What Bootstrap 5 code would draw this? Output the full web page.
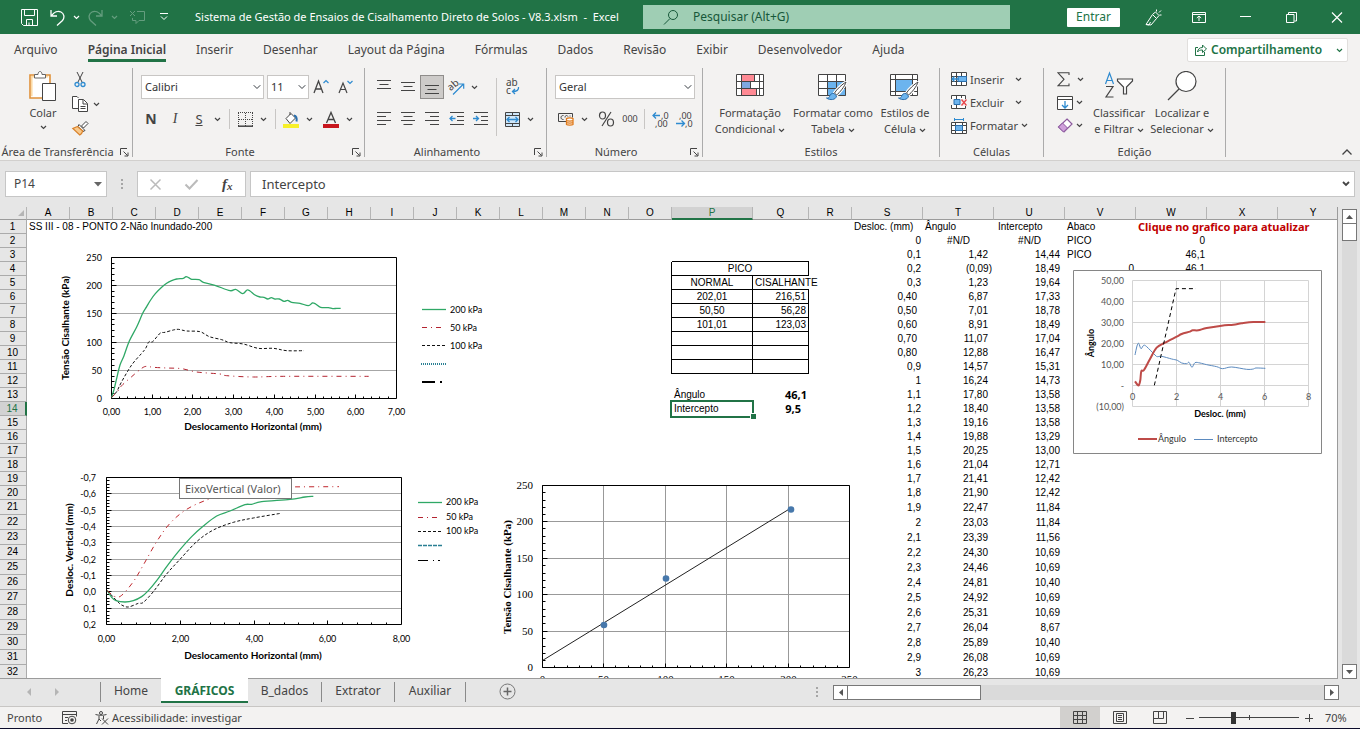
<!DOCTYPE html>
<html lang="pt-BR">
<head>
<meta charset="utf-8">
<meta name="viewport" content="width=device-width, initial-scale=1">
<title>Sistema de Gestão de Ensaios de Cisalhamento Direto de Solos - Excel</title>
<link href="https://cdn.jsdelivr.net/npm/bootstrap@5.3.0/dist/css/bootstrap.min.css" rel="stylesheet">
<style>
:root{--xl:#217346;--ink:#444;--line:#ababab;--pane:#e6e6e6}
body{font-family:"Noto Sans","Open Sans",sans-serif;font-size:11px;line-height:16px;color:var(--ink);background:var(--pane)}
svg{display:block;flex:none}
.tool svg{overflow:visible}
.ln{fill:none;stroke:currentColor}
button{color:inherit}
.titlebar{display:grid;grid-template-columns:643fr 367fr 350fr;height:34px;background:var(--xl);color:#fff}
.titlebar button{background:none;border:0;padding:0;width:24px;height:24px;display:inline-flex;align-items:center;justify-content:center}
.titlebar .slim{width:14px}
.quick{padding-left:17px}
.dim{opacity:.3}
.search-box{height:24px;background:#9fceb4;color:#17583a}
.search-box input{background:none;border:0;outline:0;font-size:12px;color:#17583a;width:100%}
.search-box input::placeholder{color:#17583a;opacity:1}
.titlebar .signin{background:#fff;color:var(--xl);width:53px;height:19px;font-size:12px;line-height:16px;border-radius:1px}
.win{margin-left:10px}
.win button{width:46px}
.menu-tabs{height:34px;background:#f3f2f1;gap:30px;padding:0 12px 0 14px}
.menu-tabs a{color:var(--ink);font-size:12px;text-decoration:none;white-space:nowrap;line-height:18px;padding:7px 0 0;border-bottom:3px solid transparent}
.menu-tabs a.active{border-color:var(--xl);font-weight:600}
.share{background:#fff;border:1px solid #e1dfdd;color:var(--xl);font-weight:600;font-size:12px;height:24px;width:161px;border-radius:2px;padding:0 4px 0 7px}
.ribbon{background:#f3f2f1;border-bottom:1px solid #d2d0ce;height:93px;padding-bottom:3px}
.rgroup{border-right:1px solid var(--line);display:flex;flex-direction:column}
.rbody{flex:1;display:flex;min-height:0}
.rfoot{height:12px;line-height:14px;position:relative;text-align:center;white-space:nowrap}
.rfoot.lead-r{padding-right:17px}
.rfoot button{position:absolute;right:3px;top:3px;border:0;background:none;padding:0}
.tool,.drop{border:0;background:none;padding:0;height:24px;display:inline-flex;align-items:center;justify-content:center;flex:none}
.tool{width:24px}.drop{width:12px}
.tool.on{background:#cdcbc9;outline:1px solid #8f8d8b;outline-offset:-1px}
.rsep{width:1px;background:#c8c6c4;height:20px;margin:0 3px 0 6px;align-self:center;flex:none}
.rows{display:flex;flex-direction:column;gap:8px;padding-top:7px}
.rows>div{display:flex;height:24px}
.ribbon .form-select{height:24px;border:1px solid #c8c6c4;border-radius:0;font-size:11px;padding:0 14px 0 3px;background-size:8px 8px;background-position:right 2px center;background-color:#fff;color:#333}
.big{border:0;background:none;padding:3px 0 0;display:flex;flex-direction:column;align-items:center;white-space:nowrap;flex:none;line-height:16px}
.big svg.pic{margin-bottom:3px}
.inl{display:inline-block;margin-left:3px;vertical-align:middle}
.small-cmd{border:0;background:none;padding:0;height:23px;display:flex;align-items:center;gap:3px;white-space:nowrap}
.clip .tool{width:20px}
.formula{height:46px;padding:10px 5px;gap:4px}
.fbox{background:#fff;border:1px solid #c6c6c6;height:26px;display:flex;align-items:center}
.fbox input{border:0;outline:0;background:none;font-size:13px;color:#444;width:100%;min-width:0;padding:0}
.fbox input.nm{font-size:12px}
.sheet{position:relative;overflow:hidden;background:#fff;border-right:1px solid #9b9b9b;border-bottom:1px solid #9b9b9b;min-height:0}
.cells{table-layout:fixed;border-collapse:separate;border-spacing:0;width:1349px;font:10px/12px "Liberation Sans",Arial,sans-serif;color:#000}
.cells th,.cells td{padding:0;height:14px;white-space:nowrap;font-weight:400}
.cells tr.tall th,.cells tr.tall td{height:15px}
.cells th{background:var(--pane);text-align:center;border-bottom:1px solid #ababab;border-right:1px solid #ababab}
.cells thead th{height:13px;line-height:12px;border-bottom-color:#9b9b9b;border-right-color:#b5b5b5}
.cells tbody th{padding-right:1px}
.cells thead th.sel{background:#d2d2d2;color:var(--xl);border-bottom:2px solid var(--xl);line-height:11px}
.cells tbody th.sel{background:#d2d2d2;color:var(--xl);border-right:2px solid var(--xl)}
.r{text-align:right}.c{text-align:center}
.cells .r{padding-right:2px}.cells .r5{padding-right:6px}.cells .r4{padding-right:5px}.cells .r8{padding-right:8px}
.cells .l{padding-left:2px}.cells .l4{padding-left:4px}
.bb{border-bottom:1px solid #000}.br{border-right:1px solid #000}
.cells .strong{font:700 11px/12px "Noto Sans",sans-serif}
.red{color:#c00000}
.pick{position:relative}
.pick::before{content:"";position:absolute;inset:-2px -1px -2px -2px;border:2px solid var(--xl)}
.pick::after{content:"";position:absolute;right:-3px;bottom:-3px;width:5px;height:5px;background:var(--xl);outline:1px solid #fff}
.chart{position:absolute;font-family:Lato,Carlito,sans-serif;font-size:9px;overflow:hidden}
.chart .ttl{font-weight:700;font-size:10px;text-anchor:middle}
.chart .e{text-anchor:end}.chart .m{text-anchor:middle}
.chart path{vector-effect:non-scaling-stroke}
.tip{position:absolute;left:179px;top:271px;width:113px;background:#fff;border:1px solid #767676;color:#575757;padding:1px 5px;line-height:17px;white-space:nowrap}
.vbar{width:15px;margin:2px 3px 0 4px;background:#dadada;display:flex;flex-direction:column}
.hbar{width:506px;height:15px;background:#dadada;display:flex}
.sb{width:15px;height:15px;background:#fff;border:1px solid #777;padding:0;display:flex;align-items:center;justify-content:center;flex:none}
.sheetbar{height:27px;padding-right:21px}
.sheetbar a{color:var(--ink);font-size:12px;text-decoration:none;text-align:center;height:20px;line-height:18px;margin-top:3px;border-right:1px solid #8a8a8a}
.sheetbar a.active{background:#fff;color:var(--xl);font-weight:700;height:25px;margin-top:-1px;line-height:26px;border:0;border-bottom:2px solid var(--xl);position:relative}
.statusbar{height:23px;background:#f3f2f1;border-top:1px solid #c8c6c4;border-bottom:1px solid #0b0b2a}
.view{width:40px;border:0;background:none;padding:0;display:flex;align-items:center;justify-content:center;height:21px}
.view.on{background:#d2d0ce}
.zoomer{width:100px;height:12px;margin:0 5px;appearance:none;background:linear-gradient(#444,#444) 50% 50%/1px 5px no-repeat,linear-gradient(#444,#444) 0 50%/100% 1px no-repeat}
.zoomer::-webkit-slider-thumb{appearance:none;width:5px;height:12px;background:#333;border:0;border-radius:0}
</style>
</head>
<body class="d-flex flex-column vh-100 overflow-hidden">

<svg width="0" height="0" class="position-absolute" aria-hidden="true">
  <symbol id="chev" viewBox="0 0 7 5"><path class="ln" stroke-width="1.2" d="M1 1l2.500 2.500L6 1"/></symbol>
  <symbol id="launch" viewBox="0 0 9 9"><path class="ln" d="M.5 7V.5H7M3.500 3.500l4 4M8 4.500V8H4.500"/></symbol>
  <symbol id="brush" viewBox="0 0 22 20"><path fill="#fff" stroke="#fff" stroke-width="3" d="M20.500 1C17 3 11 8.500 9 12l2 2c3-2 8.500-9 9.500-13z"/><path fill="#fff" stroke="#444" d="M20.500 1C17 3 11 8.500 9 12l2 2c3-2 8.500-9 9.500-13z"/><path fill="#6cb4ee" stroke="#2b6fad" d="M8.500 12.500c-2.500-.5-4 1-4.500 3-.3 1.200-1.500 1.700-3 1.500 3.500 2.600 9.500 2 10-2z"/></symbol>
</svg>

<header class="titlebar flex-shrink-0">
  <div class="quick d-flex align-items-center text-nowrap">
    <button aria-label="Salvar"><svg width="17" height="17" viewBox="0 0 17 17"><path class="ln" d="M.5.500h16v16H2.500l-2-2zM3.500.500v6h10v-6M5.500 16.500v-6h6v6M8 13.500v3"/></svg></button>
    <button class="ms-1" aria-label="Desfazer"><svg width="15" height="17" viewBox="0 0 15 17"><path class="ln" stroke-width="1.300" d="M1 1v6h6M1.200 7C4 3 8 1.500 11 3s4 5.500 1.500 8.500L7 16.500"/></svg></button>
    <button class="slim" aria-label="Mais"><svg width="7" height="5"><use href="#chev"/></svg></button>
    <button class="dim" aria-label="Refazer"><svg width="15" height="17" viewBox="0 0 15 17"><path class="ln" stroke-width="1.300" d="M14 1v6H8M13.800 7C11 3 7 1.500 4 3S0 8.500 2.500 11.500L8 16.500"/></svg></button>
    <button class="slim dim" aria-label="Mais"><svg width="7" height="5"><use href="#chev"/></svg></button>
    <button class="dim ms-1" aria-label="Comentário"><svg width="16" height="15" viewBox="0 0 16 15"><path class="ln" d="M8 1.500h7.500v9H10l-3 3v-3H3.500V8M1 1l5 5M6 1L1 6"/></svg></button>
    <button class="slim ms-2" aria-label="Personalizar"><svg width="8" height="8" viewBox="0 0 8 8"><path class="ln" d="M0 .5h8M1 3.500l3 3 3-3"/></svg></button>
    <span class="ps-4 flex-fill overflow-hidden">Sistema de Gestão de Ensaios de Cisalhamento Direto de Solos - V8.3.xlsm &nbsp;-&nbsp; Excel</span>
  </div>
  <label class="search-box d-flex align-items-center align-self-center ps-3">
    <svg width="16" height="16" viewBox="0 0 16 16" class="ms-1 me-2"><circle class="ln" cx="10" cy="6" r="4.500"/><path class="ln" d="M7 9.500L1 15.500"/></svg>
    <input type="text" class="ms-1" placeholder="Pesquisar (Alt+G)" aria-label="Pesquisar">
  </label>
  <div class="d-flex align-items-center justify-content-end">
    <button class="signin">Entrar</button>
    <div class="win d-flex">
      <button aria-label="Novidades"><svg width="17" height="17" viewBox="0 0 17 17"><path class="ln" d="M1 15.500L7.500 5.500l4 4-5.500 6.500zM1 15.500l3 .5 1.500-3M8 5l2.500-2 3.500 3.500-2.500 3M11.500 2.500V.5M14 3.500l2-2M14.500 6h2"/></svg></button>
      <button aria-label="Opções da faixa"><svg width="14" height="11" viewBox="0 0 14 11"><path class="ln" d="M.5.500h13v10H.5zM.5 2.500h13M7 9V4M4.800 6L7 4l2.200 2"/></svg></button>
      <button aria-label="Minimizar"><svg width="11" height="11"><path class="ln" d="M0 4.500h11"/></svg></button>
      <button aria-label="Restaurar"><svg width="11" height="11" viewBox="0 0 11 11"><path class="ln" d="M.5 2.500h7.500v8H.5zM2.500 2V.5H10.500v8.500H8.500"/></svg></button>
      <button aria-label="Fechar"><svg width="12" height="11" viewBox="0 0 12 11"><path class="ln" stroke-width="1.200" d="M1 .5l10 10M11 .5L1 10.500"/></svg></button>
    </div>
  </div>
</header>

<nav class="menu-tabs d-flex align-items-start flex-shrink-0">
  <a href="#">Arquivo</a><a href="#" class="active">Página Inicial</a><a href="#">Inserir</a><a href="#">Desenhar</a><a href="#">Layout da Página</a><a href="#">Fórmulas</a><a href="#">Dados</a><a href="#">Revisão</a><a href="#">Exibir</a><a href="#">Desenvolvedor</a><a href="#">Ajuda</a>
  <button class="share d-flex align-items-center ms-auto mt-1"><svg width="12" height="12" viewBox="0 0 12 12"><path class="ln" d="M3 3.500H.5v8h9V8M2.500 8c.5-3 2-4.500 5-4.500V1l4 4-4 3.500V6C5 6 3.500 6.500 2.500 8z"/></svg><span class="mx-1">Compartilhamento</span><svg class="ms-auto" width="7" height="5"><use href="#chev"/></svg></button>
</nav>

<section class="ribbon d-flex flex-shrink-0">
  <div class="rgroup" style="width:133px">
    <div class="rbody">
      <button class="big" style="width:54px;margin-left:16px">
        <svg class="pic" width="28" height="31" viewBox="0 0 28 31"><path fill="#fff" stroke="#e0913a" stroke-width="1.600" d="M1 4h20v23H1z"/><path fill="none" stroke="#fbd9a3" stroke-width="1.500" d="M2.800 25.200V5.800h16.500"/><path fill="#fff" stroke="#666" d="M5.500 7V3.500H9C9 1.500 10 .5 11 .5s2 1 2 3h3.500V7z"/><path fill="#fff" stroke="#444" d="M13.500 12.500h13v17h-13z"/></svg>
        <span class="px-3">Colar</span><svg width="7" height="16"><use href="#chev" width="7" height="5" y="4"/></svg>
      </button>
      <div class="clip d-flex flex-column">
        <button class="tool" aria-label="Recortar"><svg width="12" height="16" viewBox="0 0 12 16"><path class="ln" d="M3 0l5 10M9 0L4 10"/><g fill="none" stroke="#2e8bd0" stroke-width="1.300"><circle cx="3" cy="12.500" r="2"/><circle cx="9" cy="12.500" r="2"/></g></svg></button>
        <div class="d-flex"><button class="tool" aria-label="Copiar"><svg width="16" height="16" viewBox="0 0 16 16"><path fill="#fff" stroke="#444" d="M6 12.500H.5v-12H5L6.500 2M6.500 3.500h5l4 4v8h-9z"/><path class="ln" d="M11 4v4h4M8.500 10.500h5M8.500 12.500h5"/></svg></button><button class="drop" aria-label="Mais"><svg width="7" height="5"><use href="#chev"/></svg></button></div>
        <button class="tool" aria-label="Pincel de formatação"><svg width="17" height="15" viewBox="0 0 17 15"><path fill="#fff" stroke="#444" d="M9.500 5l4.500-4.500 2 2L11.500 7zM7 3.500l6 6-2 1-5-5z"/><path fill="#f8c98c" stroke="#d9822b" stroke-width="1.200" d="M5.500 5.500L.8 7.500l7 6.500c2-1 2.500-2.500 3-4z"/></svg></button>
      </div>
    </div>
    <div class="rfoot lead-r">Área de Transferência<button aria-label="Mais opções"><svg width="9" height="9"><use href="#launch"/></svg></button></div>
  </div>

  <div class="rgroup" style="width:232px">
    <div class="rbody"><div class="rows" style="padding-left:6px">
      <div><select class="form-select" style="width:123px;margin:0 3px 0 2px" aria-label="Fonte"><option>Calibri</option></select><select class="form-select" style="width:42px" aria-label="Tamanho"><option>11</option></select>
        <button class="tool" aria-label="Aumentar fonte"><svg width="16" height="16" viewBox="0 0 16 16"><path class="ln" stroke-width="1.300" d="M1 14L5.500 2 10 14M3 10h5"/><path fill="none" stroke="#2e8bd0" stroke-width="1.200" d="M10.500 4L13 1.500 15.500 4"/></svg></button>
        <button class="tool" aria-label="Diminuir fonte"><svg width="15" height="16" viewBox="0 0 15 16"><path class="ln" stroke-width="1.200" d="M1 14L5 4l4 10M2.500 10.500h5"/><path fill="none" stroke="#2e8bd0" stroke-width="1.200" d="M9.500 2L12 4.500 14.500 2"/></svg></button></div>
      <div><button class="tool fw-bold" style="font-size:14px">N</button><button class="tool" style="font:italic 14px 'Liberation Serif'">I</button><button class="tool text-decoration-underline" style="font-size:13px">S</button><button class="drop" aria-label="Mais"><svg width="7" height="5"><use href="#chev"/></svg></button><span class="rsep"></span>
        <button class="tool" aria-label="Bordas"><svg width="15" height="15" viewBox="0 0 15 15"><path class="ln" stroke-dasharray="1 1" d="M0 .5h15M.5 1v13M14.500 1v13M7.500 1v13M1 7.500h13"/><path class="ln" stroke-width="1.500" d="M0 14.200h15"/></svg></button><button class="drop" aria-label="Mais"><svg width="7" height="5"><use href="#chev"/></svg></button><span class="rsep"></span>
        <button class="tool" aria-label="Cor de preenchimento"><svg width="16" height="17" viewBox="0 0 16 17"><path fill="#fff" stroke="#444" d="M7 1v3M3 7.500l5-5 4.500 4.500-5.500 5.500z"/><path fill="none" stroke="#2b6fad" stroke-width="2" d="M11 4.500c2.500.5 3 3 2.500 6"/><path fill="#f7f02a" d="M0 13h16v4H0z"/></svg></button><button class="drop me-1" aria-label="Mais"><svg width="7" height="5"><use href="#chev"/></svg></button>
        <button class="tool" aria-label="Cor da fonte"><svg width="16" height="17" viewBox="0 0 16 17"><path class="ln" stroke-width="1.300" d="M3.500 12L8 1.500 12.500 12M5 8.500h6"/><path fill="#c8161d" d="M0 13h16v4H0z"/></svg></button><button class="drop" aria-label="Mais"><svg width="7" height="5"><use href="#chev"/></svg></button></div>
    </div></div>
    <div class="rfoot lead-r">Fonte<button aria-label="Mais opções"><svg width="9" height="9"><use href="#launch"/></svg></button></div>
  </div>

  <div class="rgroup" style="width:182px">
    <div class="rbody" style="padding-left:7px">
      <div class="rows">
        <div><button class="tool" aria-label="Alinhar em cima"><svg width="14" height="14"><path class="ln" d="M0 .5h14M2.500 4.500h9M0 8.500h14"/></svg></button><button class="tool" aria-label="Centralizar no meio"><svg width="14" height="14"><path class="ln" d="M0 2.500h14M2.500 6.500h9M0 10.500h14"/></svg></button><button class="tool on" aria-label="Alinhar embaixo"><svg width="14" height="14"><path class="ln" d="M0 5.500h14M2.500 9.500h9M0 13.500h14"/></svg></button>
          <button class="tool" aria-label="Orientação"><svg width="17" height="16" viewBox="0 0 17 16"><text x="1" y="10" font-size="10" fill="#444" transform="rotate(-40 5 9)">ab</text><path fill="none" stroke="#2e8bd0" stroke-width="1.200" d="M5 15.500L15.500 5M11 5h4.700v4.700"/></svg></button><button class="drop" aria-label="Mais"><svg width="7" height="5"><use href="#chev"/></svg></button></div>
        <div><button class="tool" aria-label="Alinhar à esquerda"><svg width="14" height="14"><path class="ln" d="M0 .5h14M0 4.500h9M0 8.500h14M0 12.500h9"/></svg></button><button class="tool" aria-label="Centralizar"><svg width="14" height="14"><path class="ln" d="M0 .5h14M2.500 4.500h9M0 8.500h14M2.500 12.500h9"/></svg></button><button class="tool" aria-label="Alinhar à direita"><svg width="14" height="14"><path class="ln" d="M0 .5h14M5 4.500h9M0 8.500h14M5 12.500h9"/></svg></button>
          <button class="tool" aria-label="Diminuir recuo"><svg width="15" height="14"><path class="ln" d="M1 .5h14M8 4.500h7M8 8.500h7M1 12.500h14"/><path fill="none" stroke="#2e8bd0" stroke-width="1.300" d="M6.500 6.500H1M3.500 4L1 6.500 3.500 9"/></svg></button><button class="tool" aria-label="Aumentar recuo"><svg width="15" height="14"><path class="ln" d="M1 .5h14M8 4.500h7M8 8.500h7M1 12.500h14"/><path fill="none" stroke="#2e8bd0" stroke-width="1.300" d="M0 6.500h5.500M3 4l2.500 2.500L3 9"/></svg></button></div>
      </div>
      <span class="rsep" style="height:58px;margin-left:4px"></span>
      <div class="rows">
        <div><button class="tool" aria-label="Quebrar texto"><svg width="15" height="18" viewBox="0 0 15 18"><text x="1" y="8" font-size="10" fill="#444">ab</text><text x="1" y="16" font-size="10" fill="#444">c</text><path fill="none" stroke="#2e8bd0" stroke-width="1.300" d="M13.500 9c.5 3-1.500 4.500-6 4.500M10 11l-2.500 2.500L10 16"/></svg></button></div>
        <div><button class="tool" aria-label="Mesclar"><svg width="15" height="15" viewBox="0 0 15 15"><path fill="#cfe6f8" stroke="#444" d="M.5.500h14v14H.5z"/><path class="ln" d="M.5 3.500h14M.5 11.500h14M7.500.500v3M7.500 11.500v3"/><path fill="none" stroke="#2e8bd0" stroke-width="1.300" d="M2 7.500h11M4.500 5L2 7.500 4.500 10M10.500 5L13 7.500 10.500 10"/></svg></button><button class="drop" aria-label="Mais"><svg width="7" height="5"><use href="#chev"/></svg></button></div>
      </div>
    </div>
    <div class="rfoot lead-r">Alinhamento<button aria-label="Mais opções"><svg width="9" height="9"><use href="#launch"/></svg></button></div>
  </div>

  <div class="rgroup" style="width:156px">
    <div class="rbody"><div class="rows" style="padding-left:7px">
      <div><select class="form-select" style="width:140px;margin-left:1px" aria-label="Formato de número"><option>Geral</option></select></div>
      <div><button class="tool" aria-label="Formato contábil"><svg width="16" height="14" viewBox="0 0 16 14"><path class="ln" d="M8 9.500H.5v-8h14v4M5.500 3.500c-2 0-2.500 1-2.500 2s.5 2 2.500 2M7 5.500c0-1 .5-2 1.500-2s1.500 1 1.500 1M12 3.500v1"/><path fill="#fff" stroke="#e07b1c" stroke-width="1.300" d="M8.500 6.500c1-.8 5.500-.8 6.500 0v6c-1 .8-5.500.8-6.500 0zM8.500 8.500c1 .8 5.500.8 6.500 0M8.500 10.500c1 .8 5.500.8 6.500 0"/></svg></button><button class="drop" aria-label="Mais"><svg width="7" height="5"><use href="#chev"/></svg></button><button class="tool ms-1" aria-label="Porcentagem"><svg width="17" height="16" viewBox="0 0 17 16"><g class="ln" stroke-width="1.200"><ellipse cx="4.500" cy="4.500" rx="3" ry="3.500"/><ellipse cx="12.500" cy="11.500" rx="3" ry="3.500"/><path d="M13 1L4 15"/></g></svg></button><button class="tool" style="font-size:9px">000</button><span class="rsep" style="margin-left:2px"></span>
        <button class="tool" aria-label="Aumentar casas decimais"><svg width="17" height="17" viewBox="0 0 17 17"><g font-size="9" fill="#444"><text x="9" y="8">,0</text><text x="3" y="16">,00</text></g><path fill="none" stroke="#2e8bd0" stroke-width="1.300" d="M8 4.500H1M4 1.500l-3 3 3 3"/></svg></button><button class="tool" aria-label="Diminuir casas decimais"><svg width="17" height="17" viewBox="0 0 17 17"><g font-size="9" fill="#444"><text x="3" y="8">,00</text><text x="9" y="16">,0</text></g><path fill="none" stroke="#2e8bd0" stroke-width="1.300" d="M0 12.500h8M5.500 9.500l3 3-3 3"/></svg></button></div>
    </div></div>
    <div class="rfoot lead-r">Número<button aria-label="Mais opções"><svg width="9" height="9"><use href="#launch"/></svg></button></div>
  </div>

  <div class="rgroup" style="width:237px">
    <div class="rbody" style="padding-left:7px">
      <button class="big" style="width:80px"><svg class="pic" width="28" height="31" viewBox="0 0 28 31"><path fill="#fff" d="M0 3h28v22H0z"/><path fill="#ff8a94" d="M5 3h13v7H5zM5 18h15v7H5z"/><path fill="#7fa8e0" d="M5 10h9v8H5z"/><path fill="none" stroke="#444" d="M.5 3.500h27v21H.5zM.5 10.500h27M.5 17.500h27M5.500 3.500v21M18.500 3.500v7M14.500 10.500v7M20.500 17.500v7M23.500 3.500v21"/></svg>
        <span>Formatação</span><span>Condicional<svg class="inl" width="7" height="5"><use href="#chev"/></svg></span></button>
      <button class="big" style="width:86px"><svg class="pic" width="32" height="31" viewBox="0 0 32 31"><path fill="#fff" d="M1 3h28v22H1z"/><path fill="#6cb4ee" d="M10 10h19v15H10z"/><path fill="none" stroke="#444" d="M1.500 3.500h27v21h-27zM1.500 10.500h27M1.500 17.500h27M10.500 3.500v21M19.500 3.500v21"/><use href="#brush" x="8" y="10" width="23" height="20"/></svg>
        <span>Formatar como</span><span>Tabela<svg class="inl" width="7" height="5"><use href="#chev"/></svg></span></button>
      <button class="big" style="width:58px"><svg class="pic" width="32" height="31" viewBox="0 0 32 31"><path fill="#fff" d="M1 3h28v22H1z"/><path fill="#6cb4ee" d="M6 8h17v12H6z"/><path fill="none" stroke="#444" d="M1.500 3.500h27v21h-27zM1.500 8.500h27M1.500 20.500h27M6.500 3.500v21M23.500 3.500v21"/><use href="#brush" x="8" y="10" width="23" height="20"/></svg>
        <span>Estilos de</span><span>Célula<svg class="inl" width="7" height="5"><use href="#chev"/></svg></span></button>
    </div>
    <div class="rfoot">Estilos</div>
  </div>

  <div class="rgroup" style="width:104px">
    <div class="rbody flex-column" style="padding-left:11px">
      <button class="small-cmd"><svg width="16" height="15" viewBox="0 0 16 15"><path fill="#fff" stroke="#444" d="M.5.500h15v13H.5zM.5 4.500h15M.5 9.500h15M5.500.500v13M10.500.500v13"/><path fill="#6cb4ee" stroke="#2b6fad" d="M7 4.500h8.500v5H7z"/><path fill="none" stroke="#2e8bd0" stroke-width="1.300" d="M8 7H1M3.500 4.500L1 7l2.500 2.500"/></svg>Inserir<svg class="ms-2" width="7" height="5"><use href="#chev"/></svg></button>
      <button class="small-cmd"><svg width="16" height="15" viewBox="0 0 16 15"><path fill="#fff" stroke="#444" d="M.5 4V.5h14V4M.5 10v3.500h14V11M5.500.500v13M10.500.500V3"/><path fill="#6cb4ee" stroke="#2b6fad" d="M3 4.500h6v5H3z"/><path fill="none" stroke="#e8474c" stroke-width="1.400" d="M10.500 4.500l5 6M15.500 4.500l-5 6"/></svg>Excluir<svg class="ms-2" width="7" height="5"><use href="#chev"/></svg></button>
      <button class="small-cmd"><svg width="16" height="16" viewBox="0 0 16 16"><path fill="#fff" stroke="#444" d="M.5 4.500h15v11H.5zM.5 7.500h15M.5 12.500h15M4.500 4.500v11M11.500 4.500v11"/><path fill="#6cb4ee" stroke="#2b6fad" d="M4.500 7.500h7v5h-7z"/><path fill="none" stroke="#2e8bd0" d="M3.500 1.500h9M3.500 0v3M12.500 0v3"/></svg>Formatar<svg width="7" height="5"><use href="#chev"/></svg></button>
    </div>
    <div class="rfoot">Células</div>
  </div>

  <div class="rgroup" style="width:182px">
    <div class="rbody" style="padding-left:9px">
      <div class="d-flex flex-column" style="width:37px">
        <button class="small-cmd ps-1"><svg width="13" height="15" viewBox="0 0 13 15"><path class="ln" stroke-width="1.100" d="M12 3V.8H1l6 6.500-6 6.500h11V11.500"/></svg><svg class="ms-1" width="7" height="5"><use href="#chev"/></svg></button>
        <button class="small-cmd"><svg class="ms-1" width="16" height="14" viewBox="0 0 16 14"><path fill="#fff" stroke="#444" d="M.5.500h15v13H.5zM.5 3.500h15"/><path fill="none" stroke="#2e8bd0" stroke-width="1.300" d="M8 5v7M5 9l3 3 3-3"/></svg><svg width="7" height="5"><use href="#chev"/></svg></button>
        <button class="small-cmd"><svg class="ms-1" width="16" height="15" viewBox="0 0 16 15"><path fill="#fff" stroke="#8c5a9e" stroke-width="1.200" d="M10 1l5 5-8 8-5.500-5z"/><path fill="#cf9fdb" stroke="#8c5a9e" d="M5.500 5l5 5-4 4L1.500 9z"/></svg><svg width="7" height="5"><use href="#chev"/></svg></button>
      </div>
      <button class="big" style="width:58px"><svg class="pic" width="30" height="31" viewBox="0 0 30 31"><g fill="none" stroke-width="1.200"><path stroke="#2e8bd0" d="M1.500 13L5.500 2l4 11M3 9.500h5"/><path stroke="#444" d="M2 15.500h7L2 26h7.500"/><path fill="#fff" stroke="#444" d="M13.500 8h15v2L22.500 16v7h-3v-7l-6-6z"/></g></svg>
        <span>Classificar</span><span>e Filtrar<svg class="inl" width="7" height="5"><use href="#chev"/></svg></span></button>
      <button class="big" style="width:68px"><svg class="pic" width="30" height="31" viewBox="0 0 30 31"><circle cx="19" cy="10.500" r="10" fill="#fff" stroke="#444" stroke-width="1.200"/><path class="ln" stroke-width="1.300" d="M12 18L1 29"/></svg>
        <span>Localizar e</span><span>Selecionar<svg class="inl" width="7" height="5"><use href="#chev"/></svg></span></button>
    </div>
    <div class="rfoot">Edição</div>
  </div>
  <button class="tool ms-auto align-self-end me-1" style="height:10px;width:18px" aria-label="Recolher"><svg width="10" height="6"><path class="ln" stroke-width="1.300" d="M.5 5.500L5 1l4.500 4.500"/></svg></button>
</section>

<section class="formula d-flex flex-shrink-0">
  <div class="fbox ps-2 pe-1" style="width:102px"><input class="nm" value="P14" aria-label="Caixa de nome"><svg width="8" height="5"><path fill="#666" d="M0 0h8L4 4.500z"/></svg></div>
  <svg width="22" height="26" viewBox="0 0 22 26" fill="#a6a6a6"><path d="M10 8h2v2h-2zM10 12h2v2h-2zM10 16h2v2h-2z"/></svg>
  <div class="fbox justify-content-around" style="width:109px">
    <button class="tool" aria-label="Cancelar"><svg width="11" height="11"><path fill="none" stroke="#bbb" stroke-width="1.500" d="M.5.500l10 10M10.500.500l-10 10"/></svg></button>
    <button class="tool" aria-label="Inserir"><svg width="13" height="11"><path fill="none" stroke="#bbb" stroke-width="2" d="M.5 5.500l4 4L12.500 1"/></svg></button>
    <button class="tool" style="font:italic bold 15px 'Liberation Serif'" aria-label="Inserir função"><i>f</i><small style="font-size:11px" class="align-self-end mb-1">x</small></button>
  </div>
  <div class="fbox flex-fill pe-1" style="padding-left:11px"><input value="Intercepto" aria-label="Barra de fórmulas"><svg width="8" height="6" viewBox="0 0 8 6"><path class="ln" stroke-width="1.800" d="M1 1l3 3 3-3"/></svg></div>
</section>

<main class="d-flex flex-fill" style="min-height:0">
  <div class="sheet flex-fill">
    <table class="cells" id="cells"></table>

    <svg class="chart" style="left:50px;top:38px" width="450" height="195" viewBox="50 245 450 195">
      <g id="c1g"></g>
      <g transform="translate(0 165) scale(.33333)" fill="none">
        <path class="curve" stroke="#2fa866" stroke-width="1.300" d="335 697 343 670 350 640 360 600 372 572 388 528 410 486 428 445 440 425 452 405 466 386 485 367 500 355 515 347 530 342 550 340 558 335 566 338 575 343 597 344 610 352 645 361 690 377 707 373 728 386 741 375 750 378 765 390 780 396 792 397 803 402 814 398 825 402 838 402 852 409 863 406 875 412 900 415 925 422 937 414 947 417 962 427 985 428 998 431 1010 430 1022 430"/>
        <path class="curve" stroke="#111" stroke-dasharray="3 2" d="335 697 350 680 365 650 395 600 425 565 437 550 447 530 458 530 480 505 495 502 520 495 535 493 560 498 600 500 628 515 665 524 690 533 730 537 775 550 820 550 860 557 912 557"/>
        <path class="curve" stroke="#b32430" stroke-dasharray="5 4 1 4" d="335 697 352 680 365 662 395 635 425 610 440 604 460 607 500 609 545 611 590 621 660 627 680 632 760 636 850 634 1106 634"/>
      </g>
      <g fill="none"><path stroke="#2fa866" stroke-width="1.300" d="M422 309.500h24"/><path stroke="#b32430" stroke-dasharray="5 4 1 4" d="M422 327.500h21"/><path stroke="#111" stroke-dasharray="3 2" d="M422 345.500h24"/><path stroke="#2a7f93" stroke-width="2" stroke-dasharray="1 1" d="M421 364h25"/><path stroke="#000" stroke-width="2" stroke-dasharray="13 5 2 9" d="M422 382h24"/></g>
      <text x="450" y="313">200 kPa</text><text x="450" y="331">50 kPa</text><text x="450" y="349">100 kPa</text>
      <text class="ttl" x="253" y="430">Deslocamento Horizontal (mm)</text>
      <text class="ttl" transform="translate(69 328) rotate(-90)">Tensão Cisalhante (kPa)</text>
    </svg>

    <svg class="chart" style="left:50px;top:258px" width="440" height="205" viewBox="50 465 440 205">
      <g id="c2g"></g>
      <g transform="translate(0 440) scale(.33333)" fill="none">
        <path class="curve" stroke="#2fa866" stroke-width="1.300" d="322 452 335 472 348 482 375 486 400 482 425 470 445 452 470 422 500 380 535 335 575 290 610 258 650 228 690 213 735 194 755 193 785 185 870 178 915 171 940 169"/>
        <path class="curve" stroke="#111" stroke-dasharray="3 2" d="322 452 350 482 365 495 385 501 415 490 430 487 460 455 500 402 540 358 590 305 640 270 700 247 760 234 842 220"/>
        <path class="curve" stroke="#c0272d" stroke-dasharray="5 4 1 4" d="322 452 345 470 365 466 400 425 430 375 470 305 510 250 560 208 625 178 700 155 780 144 850 141 1017 140"/>
      </g>
      <g fill="none"><path stroke="#2fa866" stroke-width="1.300" d="M418 502.500h24"/><path stroke="#b32430" stroke-dasharray="5 4 1 4" d="M418 517.500h21"/><path stroke="#111" stroke-dasharray="3 2" d="M418 531.500h24"/><path stroke="#2a7f93" stroke-width="1.500" stroke-dasharray="4 1" d="M418 545.500h24"/><path stroke="#000" stroke-dasharray="10 5 1 4 2" d="M418 560.500h24"/></g>
      <text x="446" y="505">200 kPa</text><text x="446" y="520">50 kPa</text><text x="446" y="534">100 kPa</text>
      <text class="ttl" x="253" y="659">Deslocamento Horizontal (mm)</text>
      <text class="ttl" transform="translate(73 550) rotate(-90)">Desloc. Vertical (mm)</text>
    </svg>
    <div class="tip">EixoVertical (Valor)</div>

    <svg class="chart" style="left:495px;top:268px;font-family:'Liberation Serif',serif;font-size:11px" width="370" height="215" viewBox="495 475 370 215">
      <g id="c3g"></g>
      <path stroke="#222" fill="none" d="M542.500 660.500L791 508"/>
      <g fill="#4778ab"><circle cx="604" cy="625" r="3.300"/><circle cx="666" cy="578.500" r="3.300"/><circle cx="791" cy="509.500" r="3.300"/></g>
      <text class="ttl" style="font-size:11px" transform="translate(511 577) rotate(-90)">Tensão Cisalhante (kPa)</text>
    </svg>

    <svg class="chart" style="left:1073px;top:63px" width="249" height="184" viewBox="1073 270 249 184">
      <path fill="#fff" stroke="#868686" d="M1073.500 270.500h248v183h-248z"/>
      <g id="c4g"></g>
      <g transform="translate(1040 165) scale(.33333)" fill="none">
        <path class="curve" stroke="#5b8abf" d="285 570 291 543 296 535 303 551 311 541 320 545 345 570 352 575 365 574 395 582 412 586 425 594 440 596 447 592 456 607 465 593 480 594 500 599 530 605 548 611 575 606 620 613 640 612 648 609 676 610"/>
        <path class="curve" stroke="#be4b48" stroke-width="2" d="285 649 293 660 297 660 301 645 304 618 312 615 330 582 350 548 375 533 410 515 425 507 450 500 458 496 475 496 500 489 545 482 580 479 605 475 640 471 676 471"/>
        <path stroke="#000" stroke-dasharray="4 3" d="M343 661L408 371 468 371"/>
      </g>
      <path stroke="#be4b48" stroke-width="2" d="M1138 439h19"/><path stroke="#5b8abf" d="M1194 439.500h19"/>
      <text x="1158" y="442" fill="#333">Ângulo</text><text x="1217" y="442" fill="#333">Intercepto</text>
      <text class="ttl" style="font-size:9px" x="1220" y="417">Desloc. (mm)</text>
      <text class="ttl" style="font-size:9px" transform="translate(1094 343) rotate(-90)">Ângulo</text>
    </svg>
  </div>
  <div class="vbar">
    <button class="sb" aria-label="Rolar para cima"><svg width="7" height="4"><path fill="#555" d="M0 4h7L3.500 0z"/></svg></button>
    <div class="sb border-top-0" style="height:17px"></div>
    <button class="sb mt-auto" aria-label="Rolar para baixo"><svg width="7" height="4"><path fill="#555" d="M0 0h7L3.500 4z"/></svg></button>
  </div>
</main>

<nav class="sheetbar d-flex flex-shrink-0">
  <div class="d-flex align-items-center border-end" style="width:101px;height:20px;margin-top:3px;padding-left:27px;gap:24px;border-color:#8a8a8a!important"><svg width="4" height="8"><path fill="#b5b5b5" d="M4 0v8L0 4z"/></svg><svg width="4" height="8"><path fill="#b5b5b5" d="M0 0v8l4-4z"/></svg></div>
  <a href="#" class="border-0" style="width:60px">Home</a><a href="#" class="active" style="width:87px">GRÁFICOS</a><a href="#" style="width:74px">B_dados</a><a href="#" style="width:73px">Extrator</a><a href="#" style="width:71px">Auxiliar</a>
  <button class="tool" style="margin-left:32px;width:18px" aria-label="Nova planilha"><svg width="17" height="17"><circle fill="none" stroke="#777" cx="8.500" cy="8.500" r="7.500"/><path fill="none" stroke="#666" stroke-width="1.500" d="M4.500 8.500h8M8.500 4.500v8"/></svg></button>
  <svg class="ms-auto mt-2" style="margin-right:15px" width="2" height="11" fill="#a6a6a6"><path d="M0 0h2v2H0zM0 4h2v2H0zM0 8h2v2H0z"/></svg>
  <div class="hbar" style="margin-top:6px"><button class="sb" aria-label="Rolar para a esquerda"><svg width="4" height="7"><path fill="#555" d="M4 0v7L0 3.500z"/></svg></button><div class="sb border-start-0" style="width:133px"></div><button class="sb ms-auto" aria-label="Rolar para a direita"><svg width="4" height="7"><path fill="#555" d="M0 0v7l4-3.500z"/></svg></button></div>
</nav>

<footer class="statusbar d-flex align-items-center flex-shrink-0">
  <span style="width:55px;padding-left:7px">Pronto</span>
  <svg width="15" height="14" viewBox="0 0 15 14" style="margin-left:7px"><path class="ln" d="M6 12.500H.5V.5h14v5M.5 3.500h14M3 6.500h3M3 9.500h2"/><circle class="ln" cx="10" cy="9" r="3.800"/><circle cx="10" cy="9" r="1.800" fill="#444"/></svg>
  <svg width="15" height="14" viewBox="0 0 15 14" style="margin:0 3px 0 17px"><path class="ln" d="M1.500 3.500c3 1 8 1 11 0M5 5v3l-2.500 5M5 8l2 2M9.500 5v3M8 7.500l6 6M14 7.500l-6 6"/><circle class="ln" cx="7" cy="2" r="1.500"/></svg>
  <span>Acessibilidade: investigar</span>
  <button class="view on ms-auto" aria-label="Normal"><svg width="14" height="13"><path class="ln" d="M.5.500h13v12H.5zM.5 4.500h13M.5 8.500h13M4.500.500v12M9.500.500v12"/></svg></button>
  <button class="view" aria-label="Layout da página"><svg width="14" height="13"><path class="ln" d="M.5.500h13v12H.5zM3.500 2.500h7v8h-7zM5 4.500h4M5 6.500h4M5 8.500h4"/></svg></button>
  <button class="view" aria-label="Quebra de página"><svg width="14" height="13"><path class="ln" d="M.5.500h13v12H.5zM5.500.500v7h-5M5.500 7.500h5v-7"/></svg></button>
  <button class="tool" style="width:9px;margin-left:5px" aria-label="Reduzir"><svg width="8" height="8"><path class="ln" d="M0 4.500h8"/></svg></button>
  <input type="range" class="zoomer" min="0" max="100" value="34" aria-label="Zoom">
  <button class="tool" style="width:9px" aria-label="Ampliar"><svg width="8" height="8"><path class="ln" d="M0 4.500h8M4.500 0v8"/></svg></button>
  <span style="margin-left:12px;width:35px">70%</span>
</footer>

<script src="https://cdn.jsdelivr.net/npm/bootstrap@5.3.0/dist/js/bootstrap.bundle.min.js"></script>
<script>
const cols = 'ABCDEFGHIJKLMNOPQRSTUVWXY'.split('');
const widths = {P: 81, Q: 56, S: 71, T: 71, U: 71, V: 71, W: 71, X: 71, Y: 71};
const S = '0 0,1 0,2 0,3 0,40 0,50 0,60 0,70 0,80 0,9 1 1,1 1,2 1,3 1,4 1,5 1,6 1,7 1,8 1,9 2 2,1 2,2 2,3 2,4 2,5 2,6 2,7 2,8 2,9 3'.split(' ');
const T = '#N/D 1,42 (0,09) 1,23 6,87 7,01 8,91 11,07 12,88 14,57 16,24 17,80 18,40 19,16 19,88 20,25 21,04 21,41 21,90 22,47 23,03 23,39 24,30 24,46 24,81 24,92 25,31 26,04 25,89 26,08 26,23'.split(' ');
const U = '#N/D 14,44 18,49 19,64 17,33 18,78 18,49 17,04 16,47 15,31 14,73 13,58 13,58 13,58 13,29 13,00 12,71 12,42 12,42 11,84 11,84 11,56 10,69 10,69 10,40 10,69 10,69 8,67 10,40 10,69 10,69'.split(' ');
const cell = {
  A1: ['SS III - 08 - PONTO 2-Não Inundado-200', 'l'], S1: ['Desloc. (mm)', 'l'], T1: ['Ângulo', 'l'], U1: ['Intercepto', 'l4'],
  V1: ['Abaco', 'l'], W1: ['Clique no grafico para atualizar', 'l strong red'], V2: ['PICO', 'l'], V3: ['PICO', 'l'],
  W2: ['0', 'r'], W3: ['46,1', 'r'], W4: ['46,1', 'r'], V4: ['0', 'r'],
  P3: ['', 'bb'], Q3: ['', 'bb'], P4: ['PICO', 'c bb br', 2],
  P5: ['NORMAL', 'c bb br'], Q5: ['CISALHANTE', 'l bb'],
  P6: ['202,01', 'c bb br'], Q6: ['216,51', 'r bb br'], P7: ['50,50', 'c bb br'], Q7: ['56,28', 'r bb br'],
  P8: ['101,01', 'c bb br'], Q8: ['123,03', 'r bb br'],
  P13: ['Ângulo', 'l'], Q13: ['46,1', 'r strong'], P14: ['Intercepto', 'l pick'], Q14: ['9,5', 'strong r r8']
};
for (const n of [9, 10, 11]) { cell['P' + n] = ['', 'bb br']; cell['Q' + n] = ['', 'bb br']; }
for (let n = 4; n < 12; n++) cell['O' + n] = ['', 'br'];
S.forEach((v, i) => {
  const n = i + 2;
  cell['S' + n] = [v, n > 5 && n < 11 ? 'r r5' : 'r'];
  cell['T' + n] = [T[i], i ? (n == 4 ? 'r' : 'r r5') : 'c'];
  cell['U' + n] = [U[i], i ? 'r r4' : 'c'];
});
let h = '<colgroup><col style="width:27px">' + cols.map(c => `<col style="width:${widths[c] || 43}px">`).join('') + '</colgroup>';
h += '<thead><tr><th class="r"><svg width="6" height="6" class="ms-auto"><path fill="#b5b5b5" d="M6 0v6H0z"/></svg></th>' + cols.map(c => `<th class="${c == 'P' ? 'sel' : ''}">${c}</th>`).join('') + '</tr></thead><tbody>';
for (let n = 1; n <= 32; n++) {
  h += `<tr class="${n > 20 ? 'tall' : ''}"><th class="${n == 14 ? 'sel' : ''}">${n}</th>`;
  let skip = 0;
  for (const c of cols) {
    if (skip) { skip--; continue; }
    const d = cell[c + n];
    if (!d) { h += '<td></td>'; continue; }
    if (d[2]) skip = d[2] - 1;
    h += `<td class="${d[1]}"${d[2] ? ` colspan="${d[2]}"` : ''}>${d[0]}</td>`;
  }
  h += '</tr>';
}
document.getElementById('cells').innerHTML = h + '</tbody>';

// Frame, grid lines, ticks and axis labels of one chart
function axes(id, o) {
  const {x0, x1, y0, y1, xl, yl} = o, dx = (x1 - x0) / (xl.length - 1), dy = (y1 - y0) / (yl.length - 1);
  const at = v => Math.floor(v) + .5;
  let grid = '', tick = '', s = '';
  yl.forEach((t, i) => {
    const y = at(y0 + i * dy);
    grid += `M${x0} ${y}H${x1}`;
    s += `<text class="e" x="${o.lx}" y="${y + 3}">${t}</text>`;
    if (i < yl.length - 1) for (let k = 0; k < 5; k++) tick += `M${x0} ${at(y + k * dy / 5)}h${k ? 3 : 5}`;
  });
  xl.forEach((t, i) => {
    const x = at(x0 + i * dx);
    if (o.vgrid) grid += `M${x} ${y0}V${y1}`;
    s += `<text class="m" x="${x}" y="${o.ly}">${t}</text>`;
    if (i < xl.length - 1) for (let k = 0; k < 5; k++) tick += `M${at(x + k * dx / 5)} ${y1}v${k ? -2 : -4}`;
  });
  let p = `<path fill="none" stroke="${o.grid}" d="${grid}"/>`;
  p += o.frame ? `<path fill="none" stroke="#000" d="M${x0} ${y0}H${x1}V${y1}H${x0}z${tick}"/>` : '';
  document.getElementById(id).innerHTML = p + `<g fill="${o.ink}">${s}</g>`;
}
axes('c1g', {x0: 111.5, x1: 396.5, y0: 257.5, y1: 398.5, xl: ['0,00', '1,00', '2,00', '3,00', '4,00', '5,00', '6,00', '7,00'], yl: [250, 200, 150, 100, 50, 0], lx: 102, ly: 415, grid: '#a6a6a6', frame: 1, ink: '#000'});
axes('c2g', {x0: 106.5, x1: 401.5, y0: 477.5, y1: 624.5, xl: ['0,00', '2,00', '4,00', '6,00', '8,00'], yl: ['-0,7', '-0,6', '-0,5', '-0,4', '-0,3', '-0,2', '-0,1', '0,0', '0,1', '0,2'], lx: 96, ly: 642, grid: '#a6a6a6', frame: 1, ink: '#000'});
axes('c3g', {x0: 542.5, x1: 849.5, y0: 485.5, y1: 667.5, xl: [0, 50, 100, 150, 200, 250], yl: [250, 200, 150, 100, 50, 0], lx: 533, ly: 683, grid: '#999', vgrid: 1, frame: 1, ink: '#000'});
axes('c4g', {x0: 1132.5, x1: 1308.5, y0: 280.5, y1: 406.5, xl: [0, 2, 4, 6, 8], yl: ['50,00', '40,00', '30,00', '20,00', '10,00', '-', '(10,00)'], lx: 1124, ly: 400, grid: '#d4d4d4', vgrid: 1, ink: '#555'});

// Turn each list of data points into a smoothed line
const point = {};
document.querySelectorAll('.curve').forEach(el => {
  const n = el.getAttribute('d').split(' ').map(Number), p = [];
  for (let i = 0; i < n.length; i += 2) p.push([n[i], n[i + 1]]);
  let d = `M${p[0]}`;
  for (let i = 0; i < p.length - 1; i++) {
    const a = p[i - 1] || p[i], b = p[i], c = p[i + 1], e = p[i + 2] || c;
    d += `C${b[0] + (c[0] - a[0]) / 6} ${b[1] + (c[1] - a[1]) / 6} ${c[0] - (e[0] - b[0]) / 6} ${c[1] - (e[1] - b[1]) / 6} ${c}`;
  }
  el.setAttribute('d', d);
});
</script>
</body>
</html>
